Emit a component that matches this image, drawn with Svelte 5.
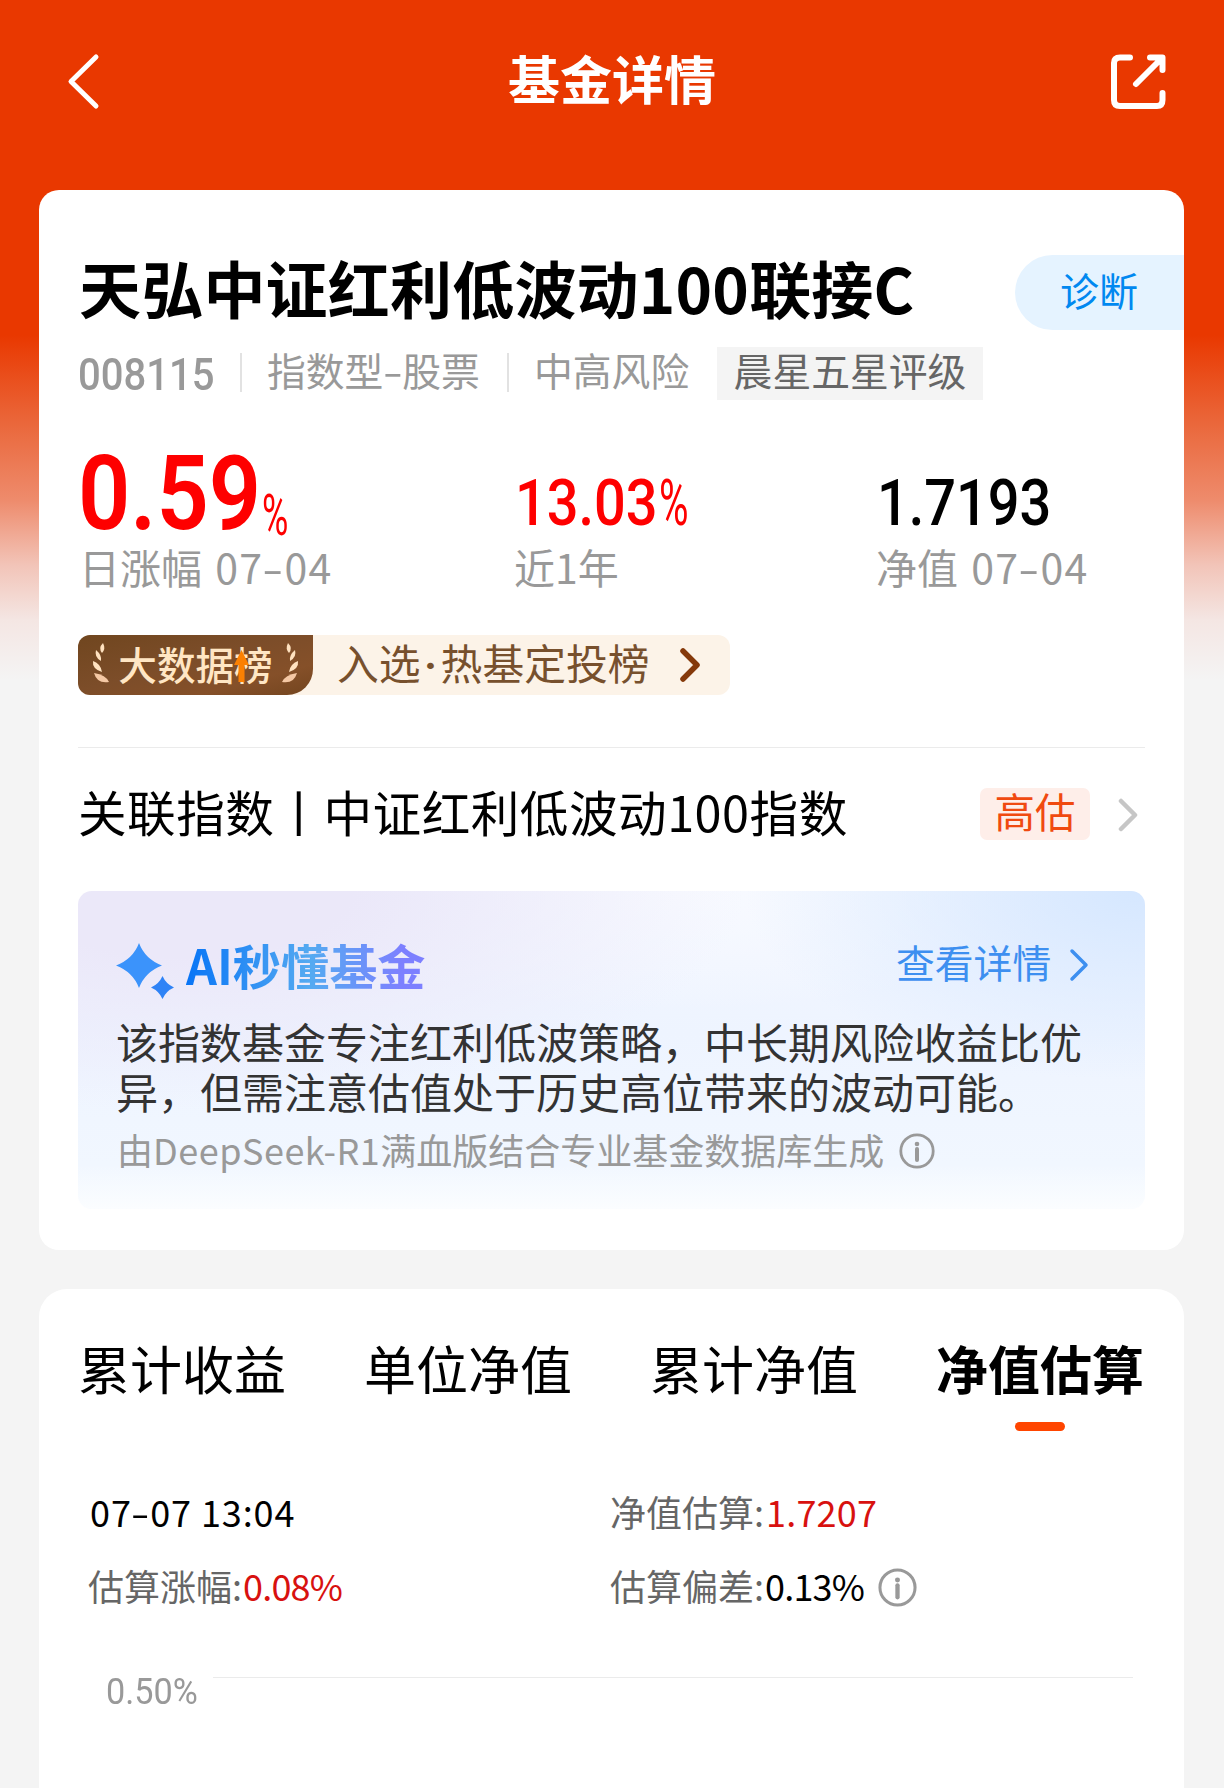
<script>
  const metrics = [
    { value: "0.59", label: "日涨幅", date: ["07", "04"], tone: "up", size: "large" },
    { value: "13.03", label: "近1年", date: null, tone: "up", size: "" },
    { value: "1.7193", label: "净值", date: ["07", "04"], tone: "", size: "" }
  ];

  const tabs = ["累计收益", "单位净值", "累计净值", "净值估算"];

  let activeTab = "净值估算";

  function selectTab(tab) {
    activeTab = tab;
  }
</script>

<style>
  :global(body) {
    margin: 0;
    background: #f4f4f4;
  }

  .page {
    width: 1224px;
    height: 1788px;
    overflow: hidden;
    font-family: "Noto Sans CJK SC", sans-serif;
    color: #000;
    background: linear-gradient(
      #e93800 0,
      #e93800 335px,
      #ea683c 425px,
      #ee8b6c 500px,
      #f2c4b8 565px,
      #f4e6e3 620px,
      #f4f4f4 680px
    );
  }

  svg {
    display: block;
    fill: none;
    flex: none;
  }

  button {
    border: 0;
    padding: 0;
    background: none;
    font-family: inherit;
    color: inherit;
    cursor: pointer;
  }

  header {
    height: 190px;
    box-sizing: border-box;
    padding: 52px 56px 0 65px;
    display: flex;
    justify-content: space-between;
  }

  header h1 {
    margin: 0 9px 0 0;
    font-size: 52px;
    line-height: 52px;
    color: #fff;
  }

  .card {
    width: 1145px;
    box-sizing: border-box;
    margin: 0 40px 0 39px;
    background: #fff;
  }

  .summary {
    height: 1060px;
    border-radius: 20px;
    padding: 65px 39px 0;
  }

  .name {
    display: flex;
    justify-content: space-between;
    height: 75px;
    margin-right: -39px;
  }

  .name h2 {
    margin: 0 0 0 1px;
    font-size: 62px;
    line-height: 64px;
    letter-spacing: 0.2px;
    white-space: nowrap;
  }

  .diagnose {
    width: 169px;
    padding: 0 1px 8px 0;
    box-sizing: border-box;
    border-radius: 38px 0 0 38px;
    background: #e5f3ff;
    color: #0088f0;
    font-size: 39px;
  }

  .meta {
    display: flex;
    height: 53px;
    margin-top: 17px;
    font-size: 38.8px;
    line-height: 45px;
    color: #999;
    white-space: nowrap;
  }

  .code {
    width: 162px;
    font-family: Roboto, sans-serif;
    font-size: 45px;
    font-weight: 500;
    line-height: 55px;
  }

  .fit {
    display: inline-block;
    transform-origin: 0 50%;
  }

  .code .fit {
    transform: scaleX(0.89);
  }

  .dash {
    display: inline-block;
    margin: 0 0.07em;
    transform: scaleX(1.5);
  }

  .type,
  .risk {
    border-left: 2px solid #e2e2e2;
    height: 39px;
    margin-top: 6px;
    padding-left: 25px;
    line-height: 33px;
    box-sizing: border-box;
  }

  .type {
    width: 267px;
  }

  .risk {
    width: 210px;
  }

  .rating {
    width: 266px;
    text-align: center;
    background: #f4f4f4;
    color: #666;
  }

  .metrics {
    display: grid;
    grid-template-columns: 435px 362px 1fr;
    height: 200px;
    margin-top: 35px;
  }

  .value {
    display: flex;
    align-items: flex-end;
    height: 106px;
    padding: 0 0 9px 2px;
    box-sizing: border-box;
    font-family: Roboto, sans-serif;
    font-weight: 500;
    font-size: 65px;
    line-height: 0.9;
  }

  .value.up {
    color: #fe0000;
  }

  .value .fit {
    transform: scaleX(0.86);
    width: 144px;
  }

  .value .percent {
    transform: scaleX(0.62);
    font-weight: 400;
    width: 30px;
  }

  .value.large {
    padding: 0;
    font-size: 103px;
    font-weight: 600;
  }

  .value.large .fit {
    width: 184px;
    transform: scaleX(0.89);
  }

  .value.large .percent {
    font-size: 58px;
    width: 30px;
    transform: scaleX(0.62);
  }

  .label {
    padding-left: 1px;
    font-size: 41px;
    line-height: 50px;
    color: #999;
    white-space: nowrap;
  }

  .date {
    margin-left: 4px;
    letter-spacing: 1.3px;
  }

  .ranking {
    display: flex;
    width: 652px;
    height: 60px;
    border-radius: 12px;
    background: #fcf3e8;
  }

  .badge {
    display: flex;
    flex: none;
    align-items: center;
    justify-content: center;
    position: relative;
    width: 235px;
    border-radius: 12px 0 26px 12px;
    background: linear-gradient(165deg, #70461f, #7c4d29 45%, #855029 75%, #74451f);
    color: #ffe6c4;
    font-size: 38.6px;
    font-weight: 500;
    line-height: 52px;
  }

  .badge .text {
    padding: 0 7px 5px;
  }

  .arrow {
    position: absolute;
    left: 156px;
    top: 15px;
  }

  .ranking .text-main {
    flex: none;
    padding-left: 24px;
    width: 367px;
    font-size: 41.8px;
    line-height: 54px;
    color: #77502d;
    white-space: nowrap;
    box-sizing: border-box;
  }

  .dot {
    display: inline-block;
    width: 20px;
    font-family: Roboto, sans-serif;
    font-weight: 700;
    text-align: center;
  }

  .ranking > :global(svg) {
    margin-top: 13px;
  }

  .index {
    display: flex;
    margin-top: 52px;
    padding-top: 40px;
    height: 103px;
    border-top: 1px solid #ebebeb;
    font-size: 48.6px;
    line-height: 46px;
    letter-spacing: 0.5px;
    white-space: nowrap;
  }

  .index-name {
    width: 902px;
    box-sizing: border-box;
  }

  .level {
    width: 110px;
    height: 52px;
    border-radius: 7px;
    background: #feeee9;
    color: #f04a10;
    font-size: 40.5px;
    letter-spacing: 0;
    text-align: center;
    margin-right: 28px;
  }

  .index :global(svg) {
    margin-top: 10px;
  }

  .ai {
    height: 318px;
    box-sizing: border-box;
    padding: 46px 39px 0;
    border-radius: 14px;
    background:
      linear-gradient(transparent 86%, #fbfdff 100%),
      radial-gradient(ellipse 400px 190px at 100% 0, #d5e7ff, transparent),
      radial-gradient(ellipse 560px 220px at 10% 0, #ebe8f9 30%, transparent),
      radial-gradient(ellipse 400px 120px at 56% 0, #f8faff, transparent),
      linear-gradient(#f2f6ff, #eef4ff 45%, #f2f8ff);
  }

  .ai-head {
    display: flex;
    height: 79px;
  }

  .ai-head > svg {
    margin: 5px 1px 0 -1px;
  }

  .ai-head h3 {
    margin: 0 0 0 11px;
    width: 710px;
    font-size: 48.2px;
    line-height: 54px;
  }

  .ai-head h3 span {
    color: transparent;
    background: linear-gradient(90deg, #0875f6, #55aaf1 52%, #7d80ff 90%);
    background-clip: text;
    -webkit-background-clip: text;
  }

  .more {
    display: flex;
    gap: 18px;
    color: #3d8ff0;
    font-size: 38.8px;
    line-height: 48px;
    white-space: nowrap;
  }

  .more :global(svg) {
    margin-top: 11px;
  }

  .ai p {
    margin: 0 0 0 -1px;
    font-size: 42px;
    line-height: 49.5px;
    color: #333;
    white-space: nowrap;
  }

  .source {
    display: flex;
    margin-top: 13px;
    color: #999;
    font-size: 36px;
    line-height: 42px;
    white-space: nowrap;
  }

  .latin {
    letter-spacing: 0.5px;
  }

  .source :global(svg) {
    margin: 5px 0 0 15px;
  }

  .estimate {
    height: 520px;
    margin-top: 39px;
    padding: 50px 40px 0 39px;
    border-radius: 28px 28px 0 0;
  }

  .tabs {
    display: flex;
    justify-content: space-between;
    height: 92px;
  }

  .tabs button {
    display: flex;
    flex-direction: column;
    align-items: center;
    font-size: 52px;
    line-height: 58px;
  }

  .tabs .active {
    font-weight: 700;
  }

  .tabs .active::after {
    content: "";
    width: 50px;
    height: 9px;
    margin-top: 25px;
    border-radius: 5px;
    background: #ff4500;
  }

  .figures {
    display: grid;
    grid-template-columns: 522px 1fr;
    grid-auto-rows: 74px;
    padding: 56px 0 0 10px;
    font-size: 36px;
    line-height: 48px;
    white-space: nowrap;
  }

  .figures > div {
    display: flex;
  }

  .figures .time {
    padding-left: 2px;
    letter-spacing: 0.9px;
  }

  .figures .key {
    color: #666;
    width: 155px;
  }

  .figures .nav {
    padding-left: 1px;
    letter-spacing: 0.2px;
  }

  .figures .rate {
    letter-spacing: -0.8px;
  }

  .figures .red {
    color: #d8110f;
  }

  .figures :global(svg) {
    margin: 7px 0 0 14px;
  }

  .axis {
    display: flex;
    margin: 42px 11px 0 28px;
  }

  .axis span {
    width: 107px;
    color: #999;
    font-family: Roboto, sans-serif;
    font-size: 36px;
    line-height: 30px;
  }

  .axis .fit {
    font-weight: 400;
    transform: scaleX(0.95);
  }

  .axis i {
    flex: 1;
    height: 1px;
    background: #ebebeb;
  }
</style>

{#snippet info(size)}
  <svg width={size} height={size} viewBox="0 0 36 36">
    <circle cx="18" cy="18" r="16.2" stroke="#999" stroke-width="2.8" />
    <circle cx="18" cy="11" r="2.3" fill="#999" />
    <path d="M18 16v11" stroke="#999" stroke-width="4" stroke-linecap="round" />
  </svg>
{/snippet}

{#snippet chevron(color, width)}
  <svg width="22" height="34" viewBox="0 0 22 34">
    <path d="M3 3l14 14L3 31" stroke={color} stroke-width={width} stroke-linecap="round" stroke-linejoin="round" />
  </svg>
{/snippet}

{#snippet laurel(flip)}
  <svg width="21" height="48" viewBox="0 0 21 48">
    <g transform={flip ? "translate(21 0) scale(-1 1)" : ""} fill="#ffe2c0">
      <path d="M13 2q3 6-1 10q-4-5 1-10z" />
      <path d="M6 9q6 5 5 11q-7-4-5-11z" />
      <path d="M3 20q8 3 9 11q-10-3-9-11z" />
      <path d="M4 32q12 2 15 9q-12 2-15-9z" fill="#f5c8a4" />
    </g>
  </svg>
{/snippet}

{#snippet date(month, day)}{month}<span class="dash">-</span>{day}{/snippet}

<div class="page">
  <header>
    <svg width="60" height="60" viewBox="0 0 60 60">
      <path d="M31 5L6 29.500L31 54" stroke="#fff" stroke-width="5" stroke-linecap="round" stroke-linejoin="round" />
    </svg>
    <h1>基金详情</h1>
    <svg width="60" height="60" viewBox="0 0 60 60">
      <path
        d="M22 5.500H12Q6 5.500 6 11V48Q6 54 12 54H49Q54.500 54 54.500 48V41M42 5.500H54.500V18M52 8L28 32"
        stroke="#fff"
        stroke-width="6"
        stroke-linecap="round"
        stroke-linejoin="round"
      />
    </svg>
  </header>

  <section class="card summary">
    <div class="name">
      <h2>天弘中证红利低波动100联接C</h2>
      <button class="diagnose">诊断</button>
    </div>

    <div class="meta">
      <span class="code"><span class="fit">008115</span></span>
      <span class="type">指数型<span class="dash">-</span>股票</span>
      <span class="risk">中高风险</span>
      <span class="rating">晨星五星评级</span>
    </div>

    <div class="metrics">
      {#each metrics as item}
        <div>
          <div class="value {item.tone} {item.size}">
            <span class="fit">{item.value}</span>
            {#if item.tone}<span class="fit percent">%</span>{/if}
          </div>
          <div class="label">
            {item.label}
            {#if item.date}<span class="date">{@render date(item.date[0], item.date[1])}</span>{/if}
          </div>
        </div>
      {/each}
    </div>

    <div class="ranking">
      <div class="badge">
        {@render laurel(false)}
        <span class="text">大数据榜</span>
        {@render laurel(true)}
        <svg class="arrow" width="15" height="32" viewBox="0 0 15 32">
          <path d="M7.500 0L15 15h-4.500v17h-6V15H0z" fill="#fb8002" />
        </svg>
      </div>
      <span class="text-main">入选<span class="dot">·</span>热基定投榜</span>
      {@render chevron("#85390a", 5.5)}
    </div>

    <div class="index">
      <span class="index-name">关联指数丨中证红利低波动100指数</span>
      <span class="level">高估</span>
      {@render chevron("#c6c6c6", 4.5)}
    </div>

    <div class="ai">
      <div class="ai-head">
        <svg width="58" height="58" viewBox="0 0 58 58">
          <path d="M23 1Q29 17 46 23.500Q29 30 23 46Q17 30 0 23.500Q17 17 23 1z" fill="#3b93fb" />
          <path d="M46.500 34Q50 42 58 45.500Q50 49 46.500 57Q43 49 35 45.500Q43 42 46.500 34z" fill="#2f83f6" />
        </svg>
        <h3><span>AI秒懂基金</span></h3>
        <div class="more">查看详情 {@render chevron("#3d8ff0", 3.5)}</div>
      </div>
      <p>该指数基金专注红利低波策略，中长期风险收益比优<br />异，但需注意估值处于历史高位带来的波动可能。</p>
      <div class="source">由<span class="latin">DeepSeek-R1</span>满血版结合专业基金数据库生成 {@render info(36)}</div>
    </div>
  </section>

  <section class="card estimate">
    <div class="tabs">
      {#each tabs as tab}
        <button class:active={tab === activeTab} on:click={() => selectTab(tab)}>{tab}</button>
      {/each}
    </div>

    <div class="figures">
      <div class="time"><span>{@render date("07", "07")} 13:04</span></div>
      <div><span class="key">净值估算:</span><span class="red nav">1.7207</span></div>
      <div><span class="key">估算涨幅:</span><span class="red rate">0.08%</span></div>
      <div><span class="key">估算偏差:</span><span class="rate">0.13%</span>{@render info(39)}</div>
    </div>

    <div class="axis">
      <span><b class="fit">0.50%</b></span>
      <i></i>
    </div>
  </section>
</div>
